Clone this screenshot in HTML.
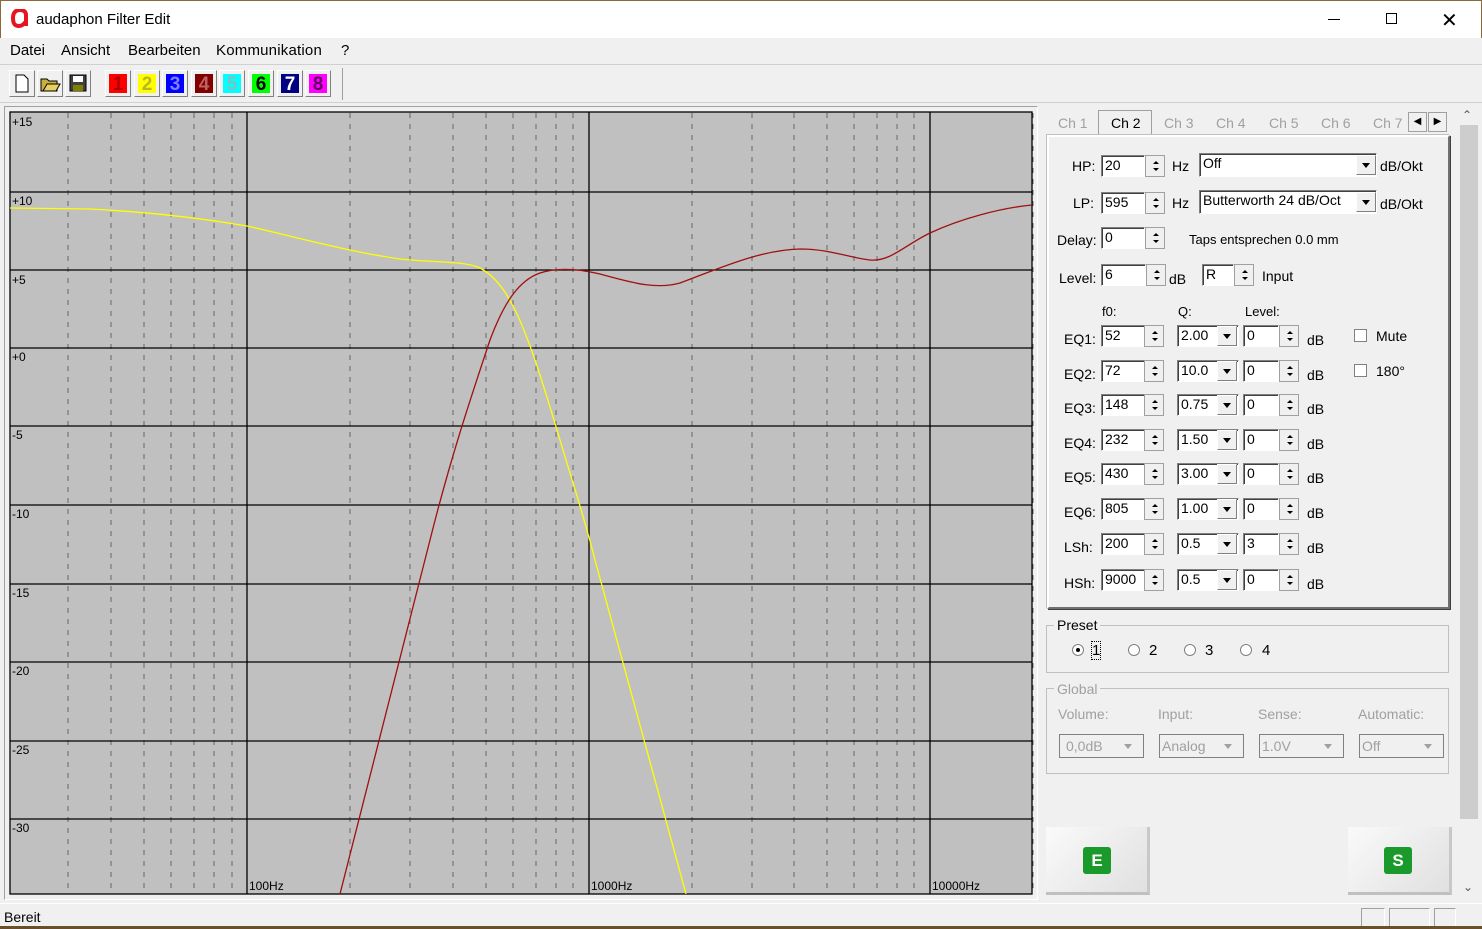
<!DOCTYPE html>
<html><head><meta charset="utf-8"><style>
*{box-sizing:border-box;margin:0;padding:0}
body{width:1482px;height:929px;background:#f0f0f0;font-family:"Liberation Sans",sans-serif;font-size:13px;color:#000;position:relative;overflow:hidden}
.a{position:absolute}
.title{left:0;top:0;width:1482px;height:38px;background:#fff;border-top:1px solid #8a6a3a;border-left:1px solid #8a6a3a;border-right:1px solid #8a6a3a}
.menu span{position:absolute;font-size:15px;white-space:nowrap}
.tb{width:26px;height:27px;background:#f0f0f0;border:1px solid;border-color:#fff #808080 #808080 #fff}
.cb{width:26px;height:27px;border:1px solid;border-color:#fff #808080 #808080 #fff;padding:3px}
.cb div{width:100%;height:100%;font:bold 19px "Liberation Sans",sans-serif;text-align:center;line-height:21px}
.in{background:#fff;border:1px solid;border-color:#808080 #fff #fff #808080;box-shadow:inset 1px 1px 0 #404040;font-size:14px;padding:1px 3px;height:22px}
.sp{width:20px;height:22px;border:1px solid #a0a0a0;background:#f0f0f0}
.sp:before{content:"";position:absolute;left:7px;top:5px;border:3px solid transparent;border-bottom:3px solid #000;border-top:0}
.sp:after{content:"";position:absolute;left:7px;top:12px;border:3px solid transparent;border-top:3px solid #000;border-bottom:0}
.dd{width:20px;height:20px;background:#f0f0f0;border:1px solid;border-color:#fff #808080 #808080 #fff}
.dd:after{content:"";position:absolute;left:5px;top:7px;border:4px solid transparent;border-top:5px solid #000;border-bottom:0}
.lbl{font-size:13px}
.gray{color:#a0a0a0}
</style></head><body>
<div class="a title"></div>
<svg class="a" style="left:11px;top:9px" width="18" height="20"><path d="M15 17V6C15 2 12 1 9 1C5 1 2 3 2 9C2 15 4 17 8 17C11 17 13 15 14 13" fill="none" stroke="#e8141e" stroke-width="4"/></svg>
<div class="a" style="left:36px;top:11px;font-size:15px">audaphon Filter Edit</div>
<div class="a" style="left:1328px;top:19px;width:12px;height:1px;background:#000"></div>
<div class="a" style="left:1386px;top:13px;width:11px;height:11px;border:1px solid #000"></div>
<div class="a" style="left:1441px;top:8px;font-size:20px;font-weight:200">✕</div>
<div class="a menu" style="left:0;top:42px"><span style="left:10px">Datei</span><span style="left:61px">Ansicht</span><span style="left:128px">Bearbeiten</span><span style="left:216px;letter-spacing:0.2px">Kommunikation</span><span style="left:341px">?</span></div>
<div class="a" style="left:0;top:64px;width:1482px;height:1px;background:#d0d0d0"></div>
<div class="a tb" style="left:9px;top:70px"><svg width="24" height="25"><path d="M6 4h8l4 4v13H6z" fill="#fff" stroke="#000"/></svg></div>
<div class="a tb" style="left:37px;top:70px"><svg width="24" height="25"><path d="M3 8h6l2 2h8v10H3z" fill="#c8b040" stroke="#000"/><path d="M5 20l4-7h13l-4 7z" fill="#e8d060" stroke="#000"/></svg></div>
<div class="a tb" style="left:65px;top:70px"><svg width="24" height="25"><rect x="4" y="4" width="16" height="16" fill="#404040" stroke="#000"/><rect x="7" y="5" width="10" height="6" fill="#fff"/><rect x="7" y="14" width="10" height="6" fill="#808000"/></svg></div>
<div class="a cb" style="left:105px;top:70px"><div style="background:#f00;color:#b00000">1</div></div>
<div class="a cb" style="left:134px;top:70px"><div style="background:#ff0;color:#b8b820">2</div></div>
<div class="a cb" style="left:162px;top:70px"><div style="background:#00f;color:#8080ff">3</div></div>
<div class="a cb" style="left:191px;top:70px"><div style="background:#800000;color:#c06060">4</div></div>
<div class="a cb" style="left:219px;top:70px"><div style="background:#0ff;color:#80c0c0">5</div></div>
<div class="a cb" style="left:248px;top:70px"><div style="background:#0f0;color:#000">6</div></div>
<div class="a cb" style="left:277px;top:70px"><div style="background:#000080;color:#fff">7</div></div>
<div class="a cb" style="left:305px;top:70px"><div style="background:#f0f;color:#600060">8</div></div>
<div class="a" style="left:342px;top:68px;width:1px;height:32px;background:#a0a0a0"></div>
<div class="a" style="left:0;top:102px;width:1482px;height:1px;background:#d0d0d0"></div>
<div class="a" style="left:4px;top:106px;width:1034px;height:794px;border:1px solid;border-color:#a0a0a0 #fff #fff #a0a0a0"></div>
<svg class="a" style="left:0;top:0" width="1040" height="900" font-family="Liberation Sans" font-size="12">
<rect x="10" y="112" width="1022" height="782" fill="#c0c0c0"/>
<g stroke="#666" stroke-dasharray="5,6">
<line x1="68" y1="113" x2="68" y2="893"/><line x1="111" y1="113" x2="111" y2="893"/><line x1="144" y1="113" x2="144" y2="893"/><line x1="171" y1="113" x2="171" y2="893"/><line x1="194" y1="113" x2="194" y2="893"/><line x1="214" y1="113" x2="214" y2="893"/><line x1="232" y1="113" x2="232" y2="893"/>
<line x1="350" y1="113" x2="350" y2="893"/><line x1="410" y1="113" x2="410" y2="893"/><line x1="453" y1="113" x2="453" y2="893"/><line x1="486" y1="113" x2="486" y2="893"/><line x1="513" y1="113" x2="513" y2="893"/><line x1="536" y1="113" x2="536" y2="893"/><line x1="556" y1="113" x2="556" y2="893"/><line x1="573" y1="113" x2="573" y2="893"/>
<line x1="692" y1="113" x2="692" y2="893"/><line x1="752" y1="113" x2="752" y2="893"/><line x1="794" y1="113" x2="794" y2="893"/><line x1="827" y1="113" x2="827" y2="893"/><line x1="854" y1="113" x2="854" y2="893"/><line x1="877" y1="113" x2="877" y2="893"/><line x1="897" y1="113" x2="897" y2="893"/><line x1="914" y1="113" x2="914" y2="893"/>
<line x1="1033" y1="113" x2="1033" y2="893"/>
</g>
<g stroke="#000" stroke-width="1.3">
<line x1="10" y1="192" x2="1032" y2="192"/><line x1="10" y1="270" x2="1032" y2="270"/><line x1="10" y1="348" x2="1032" y2="348"/><line x1="10" y1="426" x2="1032" y2="426"/><line x1="10" y1="505" x2="1032" y2="505"/><line x1="10" y1="584" x2="1032" y2="584"/><line x1="10" y1="662" x2="1032" y2="662"/><line x1="10" y1="741" x2="1032" y2="741"/><line x1="10" y1="819" x2="1032" y2="819"/>
<line x1="247" y1="112" x2="247" y2="894"/><line x1="589" y1="112" x2="589" y2="894"/><line x1="930" y1="112" x2="930" y2="894"/>
<rect x="10" y="112" width="1022" height="782" fill="none"/>
</g>
<g fill="#000">
<text x="12" y="126">+15</text><text x="12" y="205">+10</text><text x="12" y="284">+5</text><text x="12" y="361">+0</text><text x="12" y="439">-5</text><text x="12" y="518">-10</text><text x="12" y="597">-15</text><text x="12" y="675">-20</text><text x="12" y="754">-25</text><text x="12" y="832">-30</text>
<text x="249" y="890">100Hz</text><text x="591" y="890">1000Hz</text><text x="932" y="890">10000Hz</text>
</g>
<path d="M10 208 L90 209 C150 212 200 218 247 226 C300 238 350 252 400 259 C440 263 465 261 480 268 C495 276 505 290 515 310 C530 340 545 390 560 440 C575 490 585 520 595 560 L686 894" fill="none" stroke="#ffff00" stroke-width="1.3"/>
<path d="M340 894 C370 780 400 660 430 540 C450 460 470 400 490 340 C505 300 520 280 540 273 C555 268 575 268 600 274 C630 282 655 290 680 283 C720 268 760 250 800 249 C830 249 850 258 870 260 C890 262 905 245 930 233 C960 219 1000 208 1032 205" fill="none" stroke="#a01010" stroke-width="1.3"/>
</svg>
<div class="a" style="left:1048px;top:112px;width:402px;height:24px;font-size:14px">
<span class="a gray" style="left:10px;top:3px">Ch 1</span>
<div class="a" style="left:50px;top:-2px;width:54px;height:26px;background:#f0f0f0;border:1px solid #a0a0a0;border-bottom:none"></div>
<span class="a" style="left:63px;top:3px">Ch 2</span>
<span class="a gray" style="left:116px;top:3px">Ch 3</span><span class="a gray" style="left:168px;top:3px">Ch 4</span><span class="a gray" style="left:221px;top:3px">Ch 5</span><span class="a gray" style="left:273px;top:3px">Ch 6</span><span class="a gray" style="left:325px;top:3px">Ch 7</span>
<div class="a" style="left:360px;top:0;width:19px;height:20px;border:1px solid #a0a0a0;background:#f0f0f0;font-size:10px;text-align:center;line-height:18px">◀</div>
<div class="a" style="left:380px;top:0;width:19px;height:20px;border:1px solid #a0a0a0;background:#f0f0f0;font-size:10px;text-align:center;line-height:18px">▶</div>
</div>
<div class="a" style="left:1047px;top:135px;width:403px;height:474px;border:2px solid;border-color:#fff #707070 #707070 #fff;box-shadow:1px 1px 0 #404040, -1px -1px 0 #c0c0c0"></div>
<div class="a lbl" style="left:1072px;top:158px;font-size:14px">HP:</div>
<div class="a in" style="left:1101px;top:155px;width:44px">20</div><div class="a sp" style="left:1145px;top:155px"></div>
<div class="a lbl" style="left:1172px;top:158px;font-size:14px">Hz</div>
<div class="a in" style="left:1199px;top:153px;width:178px;height:24px">Off</div><div class="a dd" style="left:1356px;top:155px"></div>
<div class="a lbl" style="left:1380px;top:158px;font-size:14px">dB/Okt</div>
<div class="a lbl" style="left:1073px;top:195px;font-size:14px">LP:</div>
<div class="a in" style="left:1101px;top:192px;width:44px">595</div><div class="a sp" style="left:1145px;top:192px"></div>
<div class="a lbl" style="left:1172px;top:195px;font-size:14px">Hz</div>
<div class="a in" style="left:1199px;top:190px;width:178px;height:24px">Butterworth 24 dB/Oct</div><div class="a dd" style="left:1356px;top:192px"></div>
<div class="a lbl" style="left:1380px;top:196px;font-size:14px">dB/Okt</div>
<div class="a lbl" style="left:1057px;top:232px;font-size:14px">Delay:</div>
<div class="a in" style="left:1101px;top:227px;width:44px">0</div><div class="a sp" style="left:1145px;top:227px"></div>
<div class="a lbl" style="left:1189px;top:232px">Taps entsprechen 0.0 mm</div>
<div class="a lbl" style="left:1059px;top:270px;font-size:14px">Level:</div>
<div class="a in" style="left:1101px;top:264px;width:45px">6</div><div class="a sp" style="left:1146px;top:264px"></div>
<div class="a lbl" style="left:1169px;top:271px;font-size:14px">dB</div>
<div class="a in" style="left:1202px;top:264px;width:32px">R</div><div class="a sp" style="left:1234px;top:264px"></div>
<div class="a lbl" style="left:1262px;top:268px;font-size:14px">Input</div>
<div class="a lbl" style="left:1102px;top:304px">f0:</div><div class="a lbl" style="left:1178px;top:304px">Q:</div><div class="a lbl" style="left:1245px;top:304px">Level:</div>
<div id="eq"></div>
<script>
var rows=[["EQ1:","52","2.00","0",325],["EQ2:","72","10.0","0",360],["EQ3:","148","0.75","0",394],["EQ4:","232","1.50","0",429],["EQ5:","430","3.00","0",463],["EQ6:","805","1.00","0",498],["LSh:","200","0.5","3",533],["HSh:","9000","0.5","0",569]];
var h="";rows.forEach(function(r){var y=r[4];
h+='<div class="a lbl" style="left:1064px;top:'+(y+6)+'px;font-size:14px">'+r[0]+'</div>';
h+='<div class="a in" style="left:1101px;top:'+y+'px;width:44px">'+r[1]+'</div><div class="a sp" style="left:1144px;top:'+y+'px"></div>';
h+='<div class="a in" style="left:1177px;top:'+y+'px;width:62px;font-size:14px">'+r[2]+'</div><div class="a dd" style="left:1217px;top:'+(y+1)+'px"></div>';
h+='<div class="a in" style="left:1243px;top:'+y+'px;width:36px">'+r[3]+'</div><div class="a sp" style="left:1279px;top:'+y+'px"></div>';
h+='<div class="a lbl" style="left:1307px;top:'+(y+7)+'px;font-size:14px">dB</div>';});
document.getElementById("eq").innerHTML=h;
</script>
<div class="a" style="left:1354px;top:329px;width:13px;height:13px;background:#fff;border:1px solid #808080"></div><div class="a lbl" style="left:1376px;top:328px;font-size:14px">Mute</div>
<div class="a" style="left:1354px;top:364px;width:13px;height:13px;background:#fff;border:1px solid #808080"></div><div class="a lbl" style="left:1376px;top:363px;font-size:14px">180°</div>
<div class="a" style="left:1046px;top:625px;width:403px;height:48px;border:1px solid #c0c0c0"></div>
<div class="a" style="left:1054px;top:617px;background:#f0f0f0;padding:0 3px;font-size:14px">Preset</div>
<div class="a" style="left:1072px;top:644px;width:12px;height:12px;border-radius:50%;background:#fff;border:1px solid #808080"></div><div class="a" style="left:1076px;top:648px;width:4px;height:4px;border-radius:50%;background:#000"></div>
<div class="a" style="left:1092px;top:642px;font-size:15px;outline:1px dotted #000">1</div>
<div class="a" style="left:1128px;top:644px;width:12px;height:12px;border-radius:50%;background:#fff;border:1px solid #808080"></div><div class="a" style="left:1149px;top:642px;font-size:15px">2</div>
<div class="a" style="left:1184px;top:644px;width:12px;height:12px;border-radius:50%;background:#fff;border:1px solid #808080"></div><div class="a" style="left:1205px;top:642px;font-size:15px">3</div>
<div class="a" style="left:1240px;top:644px;width:12px;height:12px;border-radius:50%;background:#fff;border:1px solid #808080"></div><div class="a" style="left:1262px;top:642px;font-size:15px">4</div>
<div class="a" style="left:1046px;top:688px;width:403px;height:86px;border:1px solid #c0c0c0"></div>
<div class="a gray" style="left:1054px;top:681px;background:#f0f0f0;padding:0 3px;font-size:14px">Global</div>
<div class="a gray" style="left:1058px;top:706px;font-size:14px">Volume:</div><div class="a gray" style="left:1158px;top:706px;font-size:14px">Input:</div><div class="a gray" style="left:1258px;top:706px;font-size:14px">Sense:</div><div class="a gray" style="left:1358px;top:706px;font-size:14px">Automatic:</div>
<div class="a gray" style="left:1059px;top:734px;width:85px;height:24px;border:1px solid #808080;padding:3px 6px;font-size:14px">0,0dB</div>
<div class="a gray" style="left:1159px;top:734px;width:85px;height:24px;border:1px solid #808080;padding:3px 2px;font-size:14px">Analog</div>
<div class="a gray" style="left:1259px;top:734px;width:85px;height:24px;border:1px solid #808080;padding:3px 2px;font-size:14px">1.0V</div>
<div class="a gray" style="left:1359px;top:734px;width:85px;height:24px;border:1px solid #808080;padding:3px 2px;font-size:14px">Off</div>
<div class="a" style="left:1124px;top:744px;border:4px solid transparent;border-top:5px solid #a0a0a0"></div><div class="a" style="left:1224px;top:744px;border:4px solid transparent;border-top:5px solid #a0a0a0"></div><div class="a" style="left:1324px;top:744px;border:4px solid transparent;border-top:5px solid #a0a0a0"></div><div class="a" style="left:1424px;top:744px;border:4px solid transparent;border-top:5px solid #a0a0a0"></div>
<div class="a" style="left:1046px;top:827px;width:104px;height:68px;background:linear-gradient(135deg,#fafafa,#e0e0e0);border-right:3px solid #c8c8c8;border-bottom:3px solid #c0c0c0"></div>
<div class="a" style="left:1083px;top:847px;width:28px;height:27px;background:#1a9a2a;border-radius:3px;color:#fff;font-weight:bold;font-size:17px;text-align:center;line-height:27px">E</div>
<div class="a" style="left:1348px;top:827px;width:104px;height:68px;background:linear-gradient(135deg,#fafafa,#e0e0e0);border-right:3px solid #c8c8c8;border-bottom:3px solid #c0c0c0"></div>
<div class="a" style="left:1384px;top:847px;width:28px;height:27px;background:#1a9a2a;border-radius:3px;color:#fff;font-weight:bold;font-size:17px;text-align:center;line-height:27px">S</div>
<div class="a" style="left:1462px;top:108px;font-size:12px;color:#555">⌃</div>
<div class="a" style="left:1460px;top:125px;width:18px;height:694px;background:#cdcdcd"></div>
<div class="a" style="left:1463px;top:880px;font-size:12px;color:#555">⌄</div>
<div class="a" style="left:0;top:903px;width:1482px;height:1px;background:#fff"></div>
<div class="a" style="left:4px;top:909px;font-size:14px">Bereit</div>
<div class="a" style="left:1361px;top:908px;width:24px;height:21px;border:1px solid #a0a0a0;border-bottom:none;border-right-color:#fff"></div>
<div class="a" style="left:1389px;top:908px;width:41px;height:21px;border:1px solid #a0a0a0;border-bottom:none;border-right-color:#fff"></div>
<div class="a" style="left:1434px;top:908px;width:22px;height:21px;border:1px solid #a0a0a0;border-bottom:none;border-right-color:#fff"></div>
<div class="a" style="left:0;top:926px;width:1482px;height:3px;background:#6b4e2a"></div>
</body></html>
